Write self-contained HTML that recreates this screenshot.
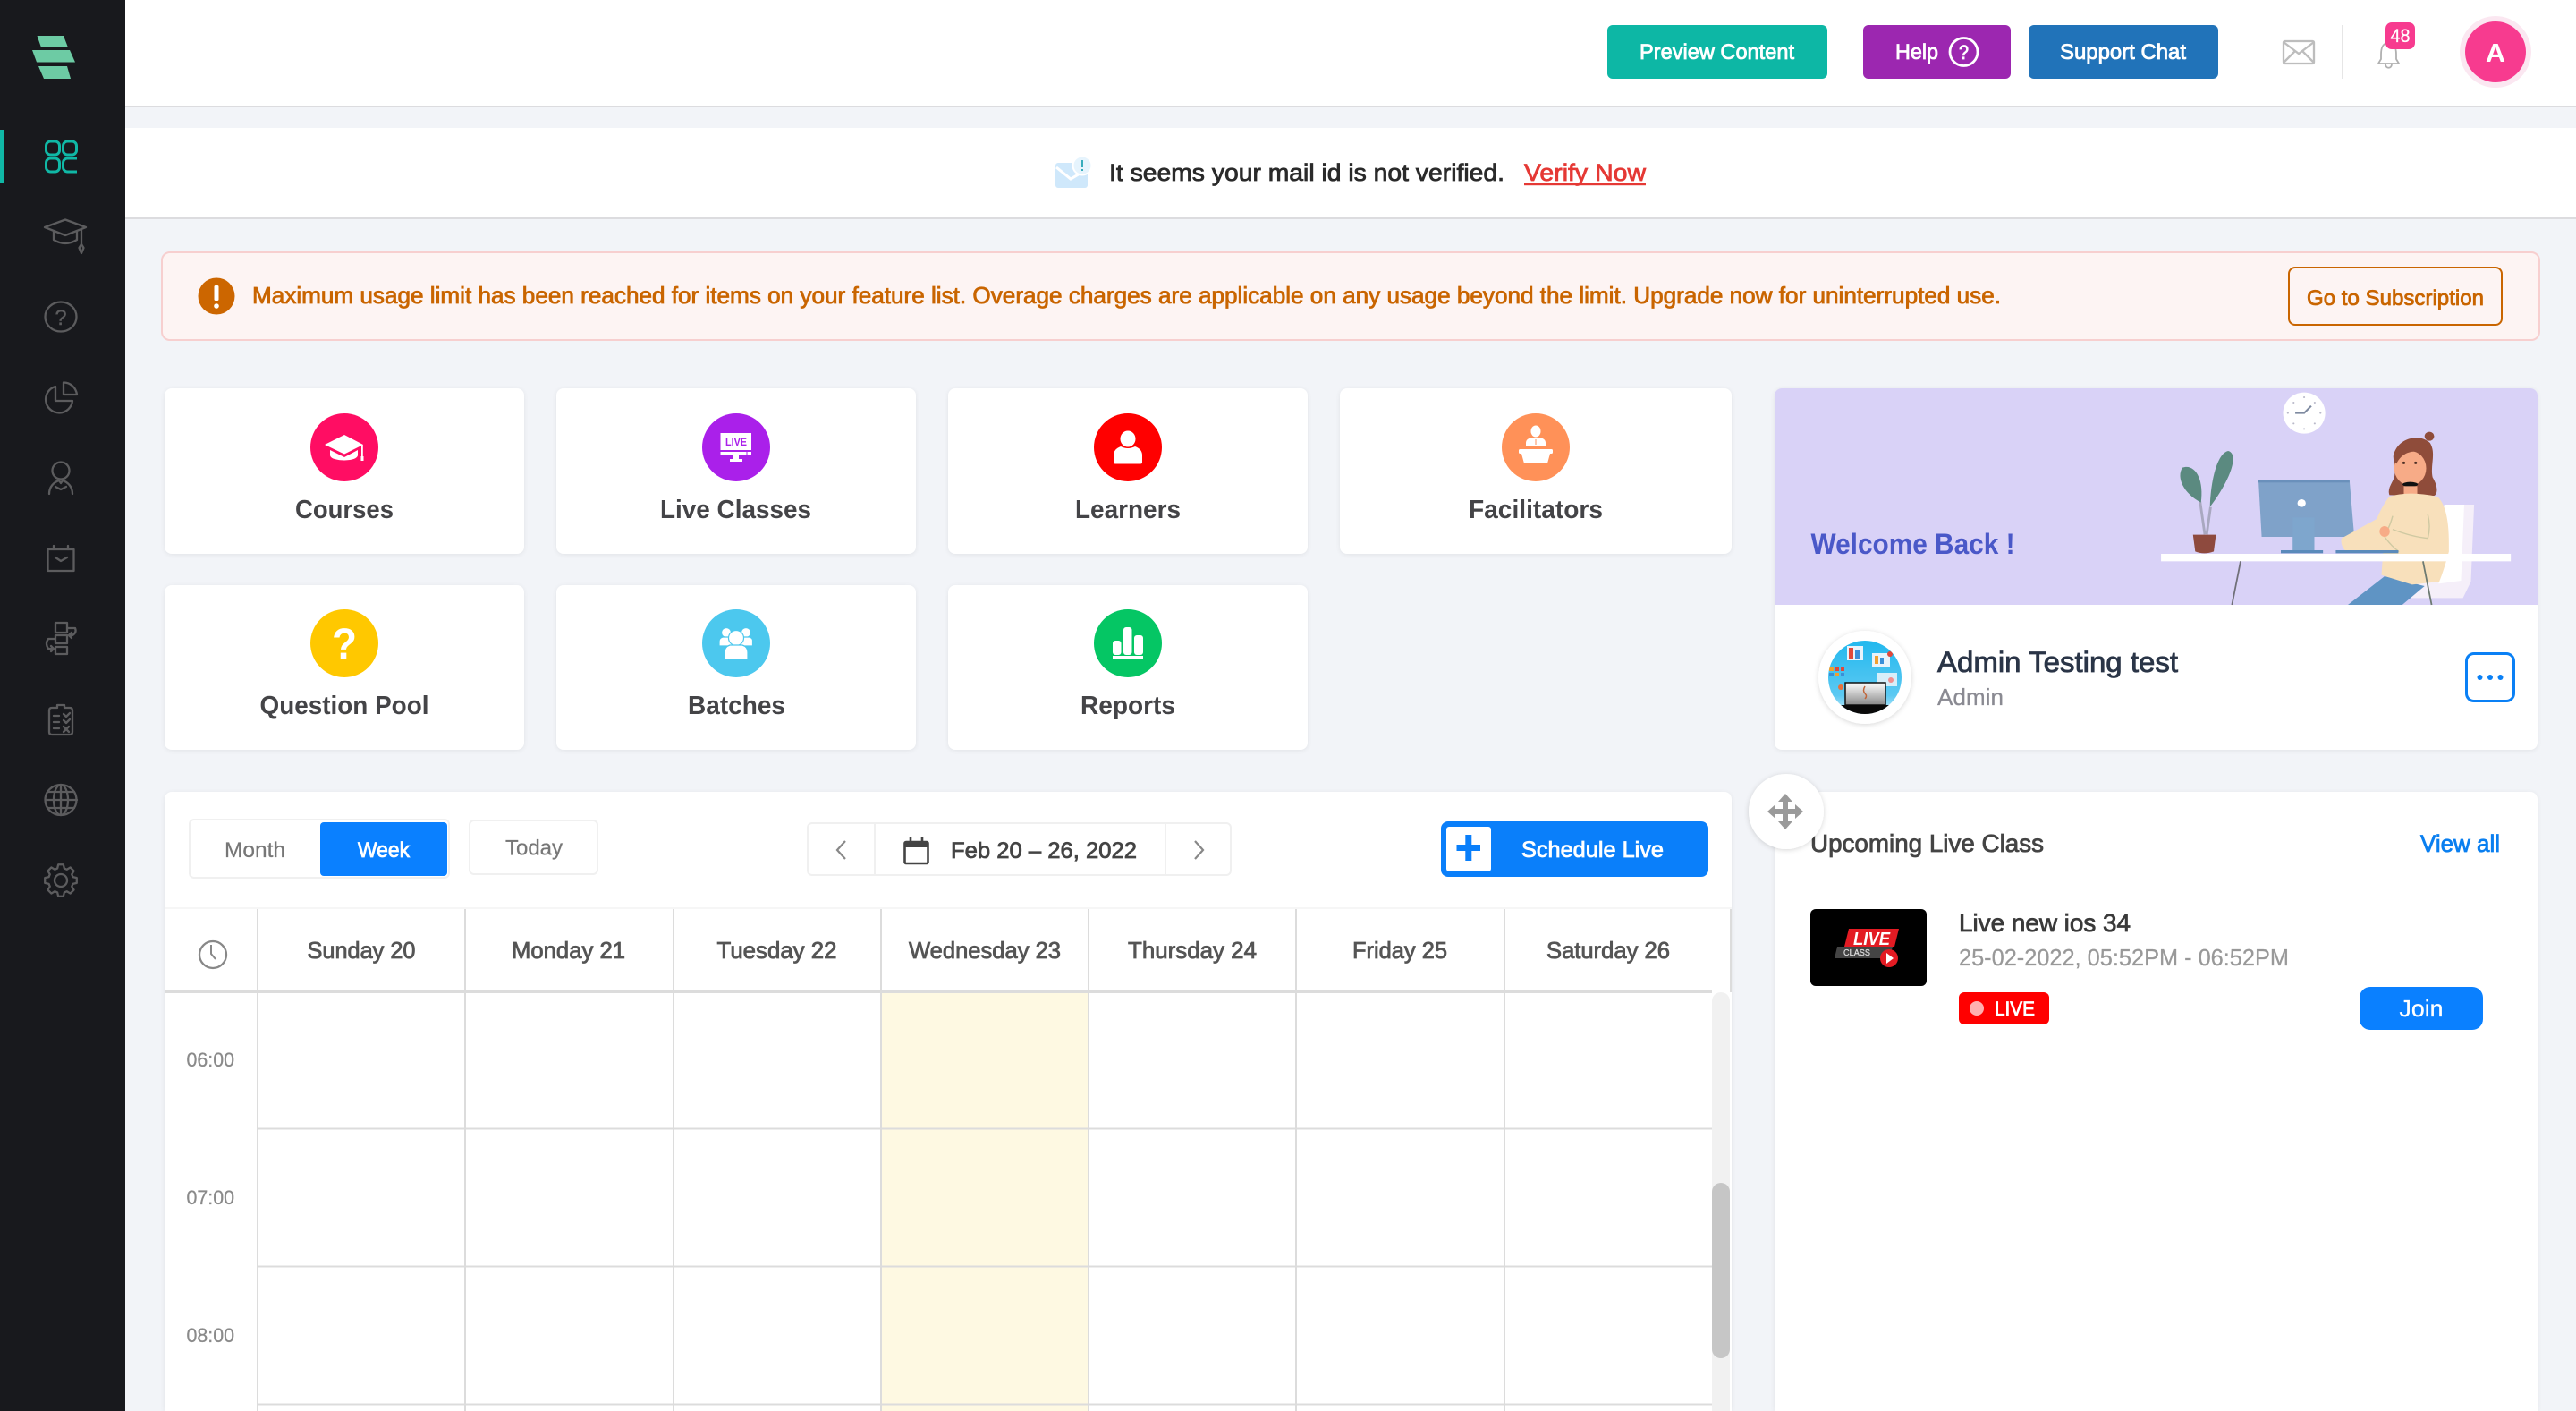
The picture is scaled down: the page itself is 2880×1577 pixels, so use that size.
<!DOCTYPE html>
<html lang="en">
<head>
<meta charset="utf-8">
<title>Dashboard</title>
<style>
html,body{margin:0;padding:0;background:#f2f4f8;width:2880px;height:1577px;overflow:hidden;}
#root{position:relative;width:2880px;height:1577px;overflow:hidden;font-family:"Liberation Sans",Arial,sans-serif;}
.b{position:absolute;box-sizing:border-box;}
.card{background:#fff;border-radius:8px;box-shadow:0 1px 6px rgba(0,0,0,.07);}
svg.o{position:absolute;left:0;top:0;display:block;}
text{font-family:"Liberation Sans",Arial,sans-serif;}
.m{fill:currentColor;stroke:currentColor;stroke-width:.8px;}
.h{fill:currentColor;font-weight:bold;}
.r{fill:currentColor;stroke:currentColor;stroke-width:.25px;}
</style>
</head>
<body>
<div id="root">
<!-- sidebar -->
<div class="b" style="left:0;top:0;width:140px;height:1577px;background:#18191d;"></div>
<div class="b" style="left:0;top:145px;width:4px;height:60px;background:#10b8a6;"></div>
<!-- top header -->
<div class="b" style="left:140px;top:0;width:2740px;height:120px;background:#fff;border-bottom:2px solid #dcdcdf;"></div>
<div class="b" style="left:1797px;top:28px;width:246px;height:60px;background:#0db7a5;border-radius:6px;"></div>
<div class="b" style="left:2083px;top:28px;width:165px;height:60px;background:#9c27b0;border-radius:6px;"></div>
<div class="b" style="left:2268px;top:28px;width:212px;height:60px;background:#2173b9;border-radius:6px;"></div>
<div class="b" style="left:2618px;top:28px;width:1px;height:60px;background:#e6e6e6;"></div>
<!-- verify banner -->
<div class="b" style="left:140px;top:143px;width:2740px;height:102px;background:#fff;border-bottom:2px solid #dcdcdf;"></div>
<!-- alert -->
<div class="b" style="left:180px;top:281px;width:2660px;height:100px;background:#fdf4f3;border:2px solid #f7cfcf;border-radius:10px;"></div>
<div class="b" style="left:2558px;top:298px;width:240px;height:66px;border:2px solid #c96500;border-radius:8px;"></div>
<!-- tiles -->
<div class="b card" style="left:184px;top:434px;width:402px;height:185px;"></div>
<div class="b card" style="left:622px;top:434px;width:402px;height:185px;"></div>
<div class="b card" style="left:1060px;top:434px;width:402px;height:185px;"></div>
<div class="b card" style="left:1498px;top:434px;width:438px;height:185px;"></div>
<div class="b card" style="left:184px;top:654px;width:402px;height:184px;"></div>
<div class="b card" style="left:622px;top:654px;width:402px;height:184px;"></div>
<div class="b card" style="left:1060px;top:654px;width:402px;height:184px;"></div>
<!-- welcome -->
<div class="b card" style="left:1984px;top:434px;width:853px;height:404px;"></div>
<div class="b" style="left:1984px;top:434px;width:853px;height:242px;background:#d9d2f7;border-radius:8px 8px 0 0;"></div>
<div class="b" style="left:2756px;top:729px;width:56px;height:56px;border:3.5px solid #0a80f5;border-radius:10px;"></div>
<!-- calendar -->
<div class="b card" style="left:184px;top:885px;width:1752px;height:692px;border-radius:8px 8px 0 0;"></div>
<div class="b" style="left:211px;top:915px;width:292px;height:67px;border:2px solid #f0f0f0;border-radius:6px;"></div>
<div class="b" style="left:358px;top:919px;width:142px;height:60px;background:#0a80ff;border-radius:4px;"></div>
<div class="b" style="left:524px;top:916px;width:145px;height:62px;border:2px solid #f0f0f0;border-radius:6px;"></div>
<div class="b" style="left:902px;top:919px;width:475px;height:60px;border:2px solid #f0f0f0;border-radius:6px;"></div>
<div class="b" style="left:977px;top:919px;width:2px;height:60px;background:#f0f0f0;"></div>
<div class="b" style="left:1302px;top:919px;width:2px;height:60px;background:#f0f0f0;"></div>
<div class="b" style="left:1611px;top:918px;width:299px;height:62px;background:#0a7ffa;border-radius:8px;"></div>
<div class="b" style="left:1617px;top:924px;width:50px;height:50px;background:#fff;border-radius:3px;"></div>
<div class="b" style="left:184px;top:1014px;width:1752px;height:2px;background:#f6f6f6;"></div>
<div class="b" style="left:986px;top:1109px;width:230px;height:468px;background:#fef9e2;"></div>
<div class="b" style="left:1914px;top:1109px;width:20px;height:468px;background:#f1f1f1;border-radius:10px 10px 0 0;"></div>
<div class="b" style="left:1914px;top:1322px;width:20px;height:196px;background:#c6c6c6;border-radius:10px;"></div>
<!-- upcoming -->
<div class="b card" style="left:1984px;top:885px;width:853px;height:692px;border-radius:8px 8px 0 0;"></div>
<div class="b" style="left:2024px;top:1016px;width:130px;height:86px;background:#000;border-radius:6px;"></div>
<div class="b" style="left:2190px;top:1109px;width:101px;height:36px;background:#f00;border-radius:6px;"></div>
<div class="b" style="left:2638px;top:1103px;width:138px;height:48px;background:#0a80ff;border-radius:12px;"></div>

<svg class="o" width="2880" height="1577" viewBox="0 0 2880 1577" xmlns="http://www.w3.org/2000/svg">
<defs>
<clipPath id="pc"><circle cx="2085" cy="757" r="41"/></clipPath>
<linearGradient id="pg" x1="0" y1="0" x2="0" y2="1"><stop offset="0" stop-color="#22b8ee"/><stop offset=".75" stop-color="#5cc9f2"/><stop offset="1" stop-color="#cfeefa"/></linearGradient>
<linearGradient id="ls" x1="0" y1="0" x2="0" y2="1"><stop offset="0" stop-color="#fff"/><stop offset="1" stop-color="#8a8a8a"/></linearGradient>
<filter id="sh" x="-20%" y="-20%" width="140%" height="140%"><feDropShadow dx="0" dy="1" stdDeviation="3" flood-color="#000" flood-opacity=".16"/></filter>
</defs>

<!-- logo -->
<g fill="#6dcba4">
<polygon points="41.500,40 71,40 76,53 46,53"/>
<polygon points="36,56 78,56 84,69.500 41,69.500"/>
<polygon points="43,74 75,74 79,88 49,88"/>
</g>

<!-- sidebar icons -->
<g fill="none" stroke="#10b8a6" stroke-width="3">
<rect x="51.500" y="158" width="15" height="15" rx="5"/>
<rect x="70.500" y="158" width="15" height="15" rx="5"/>
<rect x="51.500" y="177" width="15" height="15" rx="5"/>
<path d="M86 177h-10.500a5 5 0 0 0-5 5v5a5 5 0 0 0 5 5h10.500"/>
</g>
<g fill="none" stroke="#5c5c5e" stroke-width="2.300" stroke-linejoin="round" stroke-linecap="round">
<path d="M50 254 73 245.500 96 254 73 263z"/><path d="M60 258v10q13 8 26 0v-10"/><path d="M91 256v17"/><path d="M91 273l-2.500 4 2.500 6 2.500-6z"/>
<ellipse cx="68" cy="354" rx="17.500" ry="16.500"/>
<path d="M62 432a15 15 0 1 0 19 16H62z"/><path d="M71 427.500c8 0 14 6 15 13.500H71z"/>
<circle cx="68" cy="526" r="9.500"/><path d="M55 552c0-8 5-13 11-15l2 3 2-3c6 2 11 7 11 15"/><path d="M62 544l6 3 6-3"/>
<rect x="53.500" y="614" width="29" height="24"/><path d="M60 610v4M76 610v4M62 623l6 4 7-4"/>
<rect x="62" y="696" width="13" height="11"/><rect x="62" y="710" width="13" height="9"/><rect x="62" y="723" width="13" height="8"/>
<path d="M76 702h8q2 5-3 8h-3M80 707l-3 3 3 3"/><path d="M61 714h-7q-4 5 0 11h6M57 722l3 3-3 3"/>
<path d="M58 791h6v-3h8v3h6q3 0 3 3v24q0 3-3 3H58q-3 0-3-3v-24q0-3 3-3z"/><path d="M60 800h6M60 807h6M60 814h6M71 798l3 3 4-4M71 805l3 3 4-4M71 812l6 6M77 812l-6 6"/>
<ellipse cx="68" cy="894" rx="17.500" ry="17"/><ellipse cx="68" cy="894" rx="8" ry="17"/><path d="M68 877v34M51 894h35M53 885h30M53 903h30"/>
<circle cx="68" cy="984" r="7"/>
<polygon transform="translate(68 984)" points="13.460,-3.860 17.780,-2.820 17.780,2.820 13.460,3.860 12.240,6.790 14.560,10.580 10.580,14.560 6.790,12.240 3.860,13.460 2.820,17.780 -2.820,17.780 -3.860,13.460 -6.790,12.240 -10.580,14.560 -14.560,10.580 -12.240,6.790 -13.460,3.860 -17.780,2.820 -17.780,-2.820 -13.460,-3.860 -12.240,-6.790 -14.560,-10.580 -10.580,-14.560 -6.790,-12.240 -3.860,-13.460 -2.820,-17.780 2.820,-17.780 3.860,-13.460 6.790,-12.240 10.580,-14.560 14.560,-10.580 12.240,-6.790"/>
</g>
<text class="m" style="color:#5c5c5e;stroke-width:.4px" x="61.500" y="363" font-size="24" textLength="13" lengthAdjust="spacingAndGlyphs">?</text>

<!-- header -->
<g style="color:#fff">
<text class="m" x="1833" y="66" font-size="24" textLength="173" lengthAdjust="spacingAndGlyphs">Preview Content</text>
<text class="m" x="2119" y="66" font-size="24" textLength="48" lengthAdjust="spacingAndGlyphs">Help</text>
<circle cx="2195.500" cy="58" r="15.500" fill="none" stroke="#fff" stroke-width="2.800"/>
<text class="m" x="2190" y="66" font-size="22" textLength="11" lengthAdjust="spacingAndGlyphs">?</text>
<text class="m" x="2303" y="66" font-size="24" textLength="141" lengthAdjust="spacingAndGlyphs">Support Chat</text>
</g>
<g fill="none" stroke="#bdbdbd" stroke-width="2.300"><rect x="2553" y="46" width="34" height="25" rx="1.500"/><path d="M2553 47l17 13 17-13M2553 70l13-13M2587 70l-13-13"/></g>
<g fill="none" stroke="#b0b0b0" stroke-width="1.800" stroke-linejoin="round"><path d="M2670.500 48c-7 0-8.500 6-8.500 13v5l-3 5h23l-3-5v-5c0-7-1.500-13-8.500-13z"/><path d="M2667 72c.5 5 6.500 5 7 0"/></g>
<rect x="2667" y="25" width="33" height="30" rx="7" fill="#f73b8f"/>
<text class="r" style="color:#fff" x="2672.500" y="47" font-size="21" textLength="22" lengthAdjust="spacingAndGlyphs">48</text>
<circle cx="2790" cy="58" r="40" fill="#fbe7f1"/>
<circle cx="2790" cy="58" r="34" fill="#f73b8f"/>
<text font-weight="bold" fill="#fff" x="2779" y="69" font-size="29" textLength="22" lengthAdjust="spacingAndGlyphs">A</text>

<!-- verify -->
<rect x="1180" y="182" width="36" height="28" rx="3" fill="#cfe8fb"/>
<path d="M1181 187l16 13 19-11" fill="none" stroke="#fff" stroke-width="3"/>
<circle cx="1210" cy="185" r="10.500" fill="#e6f4fd" stroke="#fff" stroke-width="2"/>
<path d="M1210 179v8M1210 189v2" stroke="#25a5b5" stroke-width="1.800"/>
<text class="m" style="color:#2a2a2a" x="1240" y="202" font-size="27" textLength="442" lengthAdjust="spacingAndGlyphs">It seems your mail id is not verified.</text>
<text class="m" style="color:#e53935" x="1704" y="202" font-size="27" textLength="136" lengthAdjust="spacingAndGlyphs">Verify Now</text>
<rect x="1704" y="205" width="136" height="2.200" fill="#e53935"/>

<!-- alert -->
<circle cx="242" cy="331" r="20.500" fill="#cc6600"/>
<rect x="239.500" y="319" width="5" height="17" rx="1.500" fill="#fff"/><circle cx="242" cy="342" r="2.800" fill="#fff"/>
<text class="m" style="color:#c96500" x="282" y="339" font-size="25.700" textLength="1955" lengthAdjust="spacingAndGlyphs">Maximum usage limit has been reached for items on your feature list. Overage charges are applicable on any usage beyond the limit. Upgrade now for uninterrupted use.</text>
<text class="m" style="color:#c96500" x="2579" y="341" font-size="24" textLength="198" lengthAdjust="spacingAndGlyphs">Go to Subscription</text>

<!-- tile circles -->
<circle cx="385" cy="500" r="38" fill="#ff0d63"/>
<circle cx="823" cy="500" r="38" fill="#aa20ea"/>
<circle cx="1261" cy="500" r="38" fill="#ff0000"/>
<circle cx="1717" cy="500" r="38" fill="#ff9158"/>
<circle cx="385" cy="719" r="38" fill="#ffc800"/>
<circle cx="823" cy="719" r="38" fill="#4cc8ee"/>
<circle cx="1261" cy="719" r="38" fill="#05c664"/>

<!-- courses icon -->
<g fill="#fff">
<polygon points="385,486 406,497 385,507.500 363,497"/>
<path d="M369 503l16 8 15-8v6q-1 5-15 5.500-15-.5-16-5.500z"/>
<rect x="404" y="497" width="1.800" height="13"/><rect x="403.500" y="510" width="3" height="5"/>
</g>
<!-- live icon -->
<rect x="805.500" y="484" width="34.500" height="19" fill="#fff"/>
<text font-weight="bold" fill="#aa20ea" x="811" y="498" font-size="11.500" textLength="24" lengthAdjust="spacingAndGlyphs">LIVE</text>
<g fill="#fff"><rect x="805.500" y="505" width="29" height="3"/><rect x="835.500" y="505" width="4.500" height="3"/><rect x="820" y="509" width="6" height="4"/><rect x="816" y="513" width="14" height="3"/></g>
<!-- learners icon -->
<g fill="#fff"><ellipse cx="1261" cy="490.500" rx="8.500" ry="9"/><path d="M1245 517v-8q0-7 8-10 8 4 16 0 8 3 8 10v8q0 1.500-2 1.500h-28q-2 0-2-1.500z"/></g>
<!-- facilitators icon -->
<g fill="#fff"><ellipse cx="1717" cy="482" rx="5.500" ry="6.500"/><path d="M1706 499v-4q0-5 7-6h8q7 1 7 6v4z"/><rect x="1698" y="502" width="38" height="5" rx="1.500"/><polygon points="1701,507 1733,507 1730,518 1704,518"/></g>
<path d="M1717 491v6" stroke="#ff9158" stroke-width="1"/>
<!-- question icon -->
<text font-weight="bold" fill="#fff" x="371" y="736" font-size="48" textLength="28" lengthAdjust="spacingAndGlyphs">?</text>
<!-- batches icon -->
<g fill="#fff" stroke="#4cc8ee" stroke-width="1.200">
<circle cx="812" cy="707" r="5.500"/><circle cx="834" cy="707" r="5.500"/>
<path d="M804 722v-5q0-4 4-5h8q4 1 4 5v5z"/><path d="M826 722v-5q0-4 4-5h8q4 1 3.500 5v5z"/>
<circle cx="823" cy="713" r="8.500"/>
<path d="M810 737v-8q0-6 6-8h14q6 2 6 8v8z"/>
</g>
<!-- reports icon -->
<g fill="#fff"><rect x="1244" y="716" width="9.500" height="16" rx="3"/><rect x="1256" y="701" width="9.500" height="31" rx="3"/><rect x="1268" y="710" width="10" height="22" rx="3"/><rect x="1244" y="733" width="34" height="3"/></g>

<!-- tile labels -->
<g style="color:#444447">
<text class="h" x="330" y="579" font-size="29" textLength="110" lengthAdjust="spacingAndGlyphs">Courses</text>
<text class="h" x="738" y="579" font-size="29" textLength="169" lengthAdjust="spacingAndGlyphs">Live Classes</text>
<text class="h" x="1202" y="579" font-size="29" textLength="118" lengthAdjust="spacingAndGlyphs">Learners</text>
<text class="h" x="1642" y="579" font-size="29" textLength="150" lengthAdjust="spacingAndGlyphs">Facilitators</text>
<text class="h" x="290.500" y="798" font-size="29" textLength="189" lengthAdjust="spacingAndGlyphs">Question Pool</text>
<text class="h" x="769" y="798" font-size="29" textLength="109" lengthAdjust="spacingAndGlyphs">Batches</text>
<text class="h" x="1208" y="798" font-size="29" textLength="106" lengthAdjust="spacingAndGlyphs">Reports</text>
</g>

<!-- welcome -->
<text class="h" style="color:#4a58c8" x="2024.500" y="619" font-size="32" textLength="228" lengthAdjust="spacingAndGlyphs">Welcome Back !</text>

<!-- illustration -->
<g transform="translate(2300 420) scale(.35714 .33333)">
<ellipse cx="773" cy="125" rx="66" ry="69" fill="#fff"/>
<g fill="#b9b9c9"><circle cx="773" cy="72" r="3"/><circle cx="773" cy="178" r="3"/><circle cx="722" cy="125" r="3"/><circle cx="824" cy="125" r="3"/><circle cx="740" cy="90" r="3"/><circle cx="806" cy="90" r="3"/><circle cx="740" cy="160" r="3"/><circle cx="806" cy="160" r="3"/></g>
<path d="M745 125h28l22-24" fill="none" stroke="#7e8aa0" stroke-width="6"/>
<!-- plant -->
<path d="M447 420l15 112M480 440l-12 92" stroke="#a9a8c0" stroke-width="8" fill="none"/>
<path d="M450 425C395 395 372 340 392 308c38-14 68 35 58 117z" fill="#5b8a80"/>
<path d="M478 440c2-85 22-180 57-188 32 8 15 85-57 188z" fill="#5b8a80"/>
<path d="M425 533h72l-7 56q-30 12-58 0z" fill="#8e4a3e"/>
<!-- chair -->
<path d="M1212 432h93l-10 258-25 55h-170l20-40z" fill="#f5eff9"/>
<path d="M1212 432h62l-10 255-70 10z" fill="#fff"/>
<!-- jeans -->
<path d="M1025 672l125 33-70 63H910z" fill="#5f94c4"/>
<!-- monitor -->
<polygon points="630,350 915,350 930,540 640,540" fill="#7fa2c9"/>
<rect x="630" y="350" width="285" height="8" fill="#6a90bb"/>
<rect x="737" y="475" width="68" height="110" fill="#7ea6cd"/>
<rect x="700" y="585" width="132" height="10" fill="#5a8abb"/>
<circle cx="765" cy="427" r="13" fill="#fff"/>
<!-- hair back -->
<path d="M1052 270c10-60 80-80 115-45 20 35 0 75 8 115 22 40 12 60 5 62l-140-2c-10-30 22-50 16-80z" fill="#8f4c3a"/>
<circle cx="1165" cy="203" r="15" fill="#8f4c3a"/>
<!-- face -->
<ellipse cx="1105" cy="310" rx="50" ry="58" fill="#f7ab87"/>
<path d="M1055 285c15-55 78-60 97-22-30-18-72-10-90 32z" fill="#8f4c3a"/>
<circle cx="1085" cy="292" r="4.500" fill="#4b2e24"/><circle cx="1122" cy="292" r="4.500" fill="#4b2e24"/>
<ellipse cx="1105" cy="364" rx="24" ry="8" fill="#111"/>
<path d="M1085 370h42v32h-42z" fill="#f7ab87"/>
<!-- sweater -->
<path d="M1040 405q60-20 150 0 36 35 36 155v30q-15 60-30 100l-85 10-96-32 5-78H905q-20-20-15-45l110-65q20-50 40-75z" fill="#f8e0bb"/>
<path d="M1050 470q-10 40-20 50M1050 515q60 25 110 30 10-40 0-80M1025 540q20 30 45 50" fill="none" stroke="#cfc9a2" stroke-width="4"/>
<ellipse cx="1025" cy="522" rx="16" ry="18" fill="#f7ab87"/>
<rect x="872" y="585" width="196" height="10" fill="#5a8abb"/>
<!-- desk -->
<rect x="325" y="597" width="1095" height="25" fill="#fff"/>
<path d="M574 622l-27 146" stroke="#707078" stroke-width="5"/>
<path d="M1145 622l27 146" stroke="#6d7a72" stroke-width="5"/>
</g>

<!-- avatar -->
<circle cx="2085" cy="757" r="52" fill="#fff" filter="url(#sh)"/>
<g clip-path="url(#pc)">
<rect x="2044" y="716" width="82" height="82" fill="url(#pg)"/>
<rect x="2065" y="722" width="18" height="16" fill="#e8f3fb"/>
<rect x="2067" y="724" width="5" height="12" fill="#e0483a"/><rect x="2074" y="726" width="5" height="10" fill="#3a8fd8"/>
<rect x="2093" y="730" width="20" height="15" fill="#e8f3fb"/><rect x="2096" y="733" width="4" height="9" fill="#f0a030"/><rect x="2102" y="735" width="4" height="7" fill="#3a8fd8"/>
<circle cx="2113" cy="731" r="3" fill="#e0483a"/>
<g fill="#f0a030"><rect x="2045" y="746" width="5" height="4"/><rect x="2052" y="746" width="4" height="4" fill="#e0483a"/><rect x="2058" y="746" width="4" height="4" fill="#e0483a"/><rect x="2045" y="752" width="5" height="4" fill="#3a8fd8"/><rect x="2052" y="752" width="4" height="4"/><rect x="2058" y="752" width="4" height="4" fill="#3a8fd8"/></g>
<rect x="2099" y="752" width="22" height="15" fill="#d6eef9"/><circle cx="2114" cy="760" r="3" fill="#ef8f8f"/>
<circle cx="2058" cy="768" r="3" fill="#e8703a"/>
<rect x="2063" y="763" width="45" height="25" fill="url(#ls)" stroke="#111" stroke-width="1.500"/>
<path d="M2085 767q-3 5 0 8 3 3 0 6" fill="none" stroke="#c0653a" stroke-width="1.500"/>
<rect x="2044" y="788" width="82" height="10" fill="#0a0a0a"/>
</g>
<text class="m" style="color:#2a3547" x="2166" y="751" font-size="32" textLength="269" lengthAdjust="spacingAndGlyphs">Admin Testing test</text>
<text class="r" style="color:#8a8a92" x="2166" y="788" font-size="26" textLength="74" lengthAdjust="spacingAndGlyphs">Admin</text>
<g fill="#0a80f5"><circle cx="2772.500" cy="757" r="3"/><circle cx="2784" cy="757" r="3"/><circle cx="2795.500" cy="757" r="3"/></g>

<!-- calendar toolbar -->
<text class="r" style="color:#777" x="251" y="958" font-size="24" textLength="68" lengthAdjust="spacingAndGlyphs">Month</text>
<text class="m" style="color:#fff" x="400" y="958" font-size="24" textLength="58" lengthAdjust="spacingAndGlyphs">Week</text>
<text class="r" style="color:#777" x="565" y="955.500" font-size="24" textLength="64" lengthAdjust="spacingAndGlyphs">Today</text>
<path d="M945 940l-9 10 9 10" fill="none" stroke="#888" stroke-width="2.200"/>
<path d="M1336 940l9 10-9 10" fill="none" stroke="#888" stroke-width="2.200"/>
<g fill="none" stroke="#444" stroke-width="2.600"><rect x="1011.500" y="941" width="26" height="24" rx="1.500"/><path d="M1018 936v8M1031 936v8"/></g>
<rect x="1011.500" y="941" width="26" height="6" fill="#444"/>
<text class="m" style="color:#444" x="1063" y="959" font-size="25" textLength="208" lengthAdjust="spacingAndGlyphs">Feb 20 – 26, 2022</text>
<path d="M1628.500 947.500h26.500M1641.800 933v29" stroke="#0a7ffa" stroke-width="7"/>
<text class="m" style="color:#fff" x="1701" y="958" font-size="25" textLength="159" lengthAdjust="spacingAndGlyphs">Schedule Live</text>

<!-- calendar grid -->
<g stroke="#dcdcdc" stroke-width="2" fill="none">
<path d="M288 1016V1577M520 1016V1577M753 1016V1577M985 1016V1577M1217 1016V1577M1449 1016V1577M1682 1016V1577M1935 1016V1109"/>
<path d="M288 1261.500H1914M288 1415.500H1914M288 1569.500H1914"/>
</g>
<path d="M184 1108.500H1914" stroke="#dcdcdc" stroke-width="3"/>
<g style="color:#555">
<text class="m" x="343.500" y="1071" font-size="25.700" textLength="121" lengthAdjust="spacingAndGlyphs">Sunday 20</text>
<text class="m" x="572" y="1071" font-size="25.700" textLength="127" lengthAdjust="spacingAndGlyphs">Monday 21</text>
<text class="m" x="801.500" y="1071" font-size="25.700" textLength="134" lengthAdjust="spacingAndGlyphs">Tuesday 22</text>
<text class="m" x="1016" y="1071" font-size="25.700" textLength="170" lengthAdjust="spacingAndGlyphs">Wednesday 23</text>
<text class="m" x="1261" y="1071" font-size="25.700" textLength="144" lengthAdjust="spacingAndGlyphs">Thursday 24</text>
<text class="m" x="1512" y="1071" font-size="25.700" textLength="106" lengthAdjust="spacingAndGlyphs">Friday 25</text>
<text class="m" x="1729" y="1071" font-size="25.700" textLength="138" lengthAdjust="spacingAndGlyphs">Saturday 26</text>
</g>
<circle cx="238" cy="1067" r="15" fill="none" stroke="#888" stroke-width="2.300"/>
<path d="M236 1056v10l5 6" fill="none" stroke="#888" stroke-width="2"/>
<g style="color:#8a8a8a">
<text class="r" x="208.500" y="1192" font-size="22" textLength="53.500" lengthAdjust="spacingAndGlyphs">06:00</text>
<text class="r" x="208.500" y="1346" font-size="22" textLength="53.500" lengthAdjust="spacingAndGlyphs">07:00</text>
<text class="r" x="208.500" y="1500" font-size="22" textLength="53.500" lengthAdjust="spacingAndGlyphs">08:00</text>
</g>

<!-- upcoming -->
<text class="m" style="color:#444" x="2024" y="952" font-size="28" textLength="261" lengthAdjust="spacingAndGlyphs">Upcoming Live Class</text>
<text class="m" style="color:#0a7ff0" x="2706" y="952" font-size="27" textLength="89" lengthAdjust="spacingAndGlyphs">View all</text>
<circle cx="1997" cy="907" r="42" fill="#fff" filter="url(#sh)"/>
<path fill="#9a9a9a" d="M1996 887l8 9h-5v8h8v-5l9 8-9 8v-5h-8v8h5l-8 9-8-9h5v-8h-8v5l-9-8 9-8v5h8v-8h-5z"/>
<polygon points="2067,1038 2123,1038 2118,1058 2062,1058" fill="#e31b23"/>
<text font-weight="bold" font-style="italic" fill="#fff" x="2072" y="1056" font-size="20" textLength="41" lengthAdjust="spacingAndGlyphs">LIVE</text>
<polygon points="2054,1058 2116,1058 2112,1071 2051,1071" fill="#444"/>
<text class="r" style="color:#ddd" x="2061" y="1068" font-size="10" textLength="30" lengthAdjust="spacingAndGlyphs">CLASS</text>
<circle cx="2112" cy="1071" r="10" fill="#e31b23"/>
<polygon points="2109,1065 2117,1071 2109,1077" fill="#fff"/>
<text class="m" style="color:#3a3a3a" x="2190" y="1041" font-size="28" textLength="192" lengthAdjust="spacingAndGlyphs">Live new ios 34</text>
<text class="r" style="color:#999" x="2190" y="1079" font-size="26" textLength="369" lengthAdjust="spacingAndGlyphs">25-02-2022, 05:52PM - 06:52PM</text>
<circle cx="2210" cy="1127" r="8" fill="#ffb0b0"/>
<text class="m" style="color:#fff" x="2230" y="1135" font-size="22" textLength="45" lengthAdjust="spacingAndGlyphs">LIVE</text>
<text class="r" style="color:#fff" x="2682.500" y="1136" font-size="26" textLength="49" lengthAdjust="spacingAndGlyphs">Join</text>
</svg>
</div>
</body>
</html>
